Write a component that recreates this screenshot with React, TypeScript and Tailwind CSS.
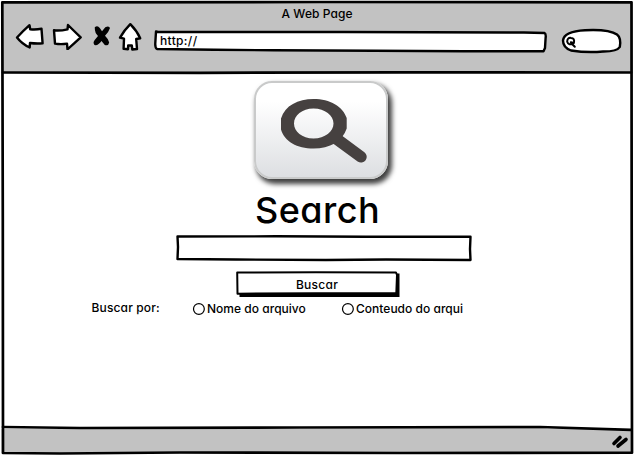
import type { ReactNode } from "react";

const ink = {
  fill: "none",
  stroke: "#000",
  strokeWidth: 2.4,
  strokeLinejoin: "round" as const,
  strokeLinecap: "round" as const,
};

/** Hand-drawn outline laid behind a control's content. */
function Sketch({ w, h, children }: { w: number; h: number; children: ReactNode }) {
  return (
    <svg className="pointer-events-none absolute left-0 top-0 overflow-visible" width={w} height={h} viewBox={`0 0 ${w} ${h}`}>
      {children}
    </svg>
  );
}

function NavIcons() {
  return (
    <div className="flex pl-[15px] pt-[22px]">
      <svg width="29" height="28" viewBox="15 22 29 28">
        <path {...ink} fill="#fff" d="M17 37.5Q23 31 29.5 25.2L30.2 29.3Q36 29.8 41.5 28.8L42.6 43.3Q36 43.8 30 43L29.7 47.5Q22 44 17 37.5Z" />
      </svg>
      <svg className="ml-[8px]" width="31" height="28" viewBox="52 22 31 28">
        <path {...ink} fill="#fff" d="M54 30.3Q60 31 67.5 29.3L68 25Q74 31 80.7 37.3Q74 43.5 67.5 49.3L67 43.6Q61 44.6 55 43.6Z" />
      </svg>
      <svg className="ml-[10px]" width="18" height="28" viewBox="93 22 18 28">
        <path d="M94.8 27.2Q97.500 24.800 99.800 28L102 31.200L105.300 27.3Q109 25.300 110 28Q108.300 33 105 35.700Q108.500 39 109.200 42.5Q108.500 46.200 104.800 44.900L101.500 41Q98 46 94.500 45Q92.500 43 94.700 40L98 36Q94.500 33 94.800 27.2Z" />
      </svg>
      <svg className="ml-[7px]" width="25" height="30" viewBox="118 22 25 30">
        <path {...ink} fill="#fff" d="M120 37.7Q124 30.5 130.3 24.2Q137 31 140.2 38.3L136.2 39L137 49L132.3 49.5L131.8 45.5L128.2 45.4L128 49.2L123.6 48.8L124 38.7Z" />
      </svg>
    </div>
  );
}

function BrowserBar() {
  return (
    <header className="relative h-[73px] shrink-0 bg-[#c2c2c2]">
      <div className="flex h-full">
        <NavIcons />
        <div className="relative ml-[11px] mt-[30px] h-[23px] w-[393px] pl-[6px] text-[12px] leading-[21px] tracking-[0.35px]">
          <Sketch w={393} h={23}>
            <path {...ink} fill="#fff" d="M2 1.5L4 2L190 2L370 2.5L390.5 3Q392.2 4 391.6 8L391 18L389.5 21.3L310 21.2L220 20.8L120 20.3L60 19.8L3 19Q1 18 1.3 13Z" />
          </Sketch>
          <span className="relative">http://</span>
        </div>
        <div className="relative ml-[14px] mt-[29px] h-[25px] w-[60px]">
          <Sketch w={60} h={25}>
            <path {...ink} fill="#fff" d="M2 11.5Q3 2.3 24 1.2Q48 0 56 5.5Q60.4 9 58.8 18Q56 22.6 42 22.5Q26 24 10 21.5Q2 18.5 2 11.5Z" />
            <path {...ink} strokeWidth={2} d="M12.5 14.2Q7.500 17 6.200 12.7Q6.200 8.400 10 8.900Q14 9.200 12.900 14L9.800 13.2M10.800 14.8L13.800 17.8" />
          </Sketch>
        </div>
      </div>
      <h1 className="absolute left-[281.500px] top-[5px] whitespace-nowrap text-[12px] leading-[17px] tracking-[0.08px]">A Web Page</h1>
    </header>
  );
}

function SearchBadge() {
  return (
    <div className="ml-[254px] flex h-[98px] w-[134px] rounded-[18px] border-[2.5px] border-[#c9caca] bg-linear-to-b from-white from-20% to-[#dddfe2] shadow-[3px_4px_5px_1px_rgba(0,0,0,0.75)]">
      <svg width="129" height="94" viewBox="256 82.500 129 94">
        <path d="M334 136.500L361 156.300" stroke="#464140" strokeWidth="11.500" strokeLinecap="round" />
        <path fillRule="evenodd" fill="#464140" d="M281 118C285 105 298 98.5 313.500 98.5C330 98.5 343 106 346.700 117.500V128C342.500 141 330 148 313.500 148C297 148 284.500 141 281 129ZM313.500 108C302 108 294 115 294 123C294 131 302 138 313.500 138C325 138 333.500 131 333.500 123C333.500 115 325 108 313.500 108Z" />
      </svg>
    </div>
  );
}

function Radio({ label, className }: { label: string; className: string }) {
  return (
    <label className={`flex items-center overflow-hidden whitespace-nowrap ${className}`}>
      <svg className="shrink-0" width="14" height="14" viewBox="0 0 14 14">
        <circle cx="6.900" cy="7" r="5.400" fill="#fff" stroke="#000" strokeWidth="1.200" />
      </svg>
      <span className="ml-px">{label}</span>
    </label>
  );
}

function SearchForm() {
  return (
    <form className="flex flex-col text-[12px]">
      <div className="relative ml-[176px] mt-[4px] h-[26px] w-[296px]">
        <Sketch w={296} h={26}>
          <path {...ink} fill="#fff" d="M1.500 1.500L100 1.300L190 1.800L294.500 1.700L294 14L294.500 25L210 24.500L150 25L60 24.500L1.500 24L2 12Z" />
        </Sketch>
      </div>
      <button type="button" className="relative ml-[236px] mt-[10px] h-[26px] w-[164px] pr-[2px] leading-[23px]">
        <Sketch w={164} h={26}>
          <path d="M3.500 22L160 21V2.500H163.500V26H3.500Z" />
          <path {...ink} strokeWidth={2} fill="#fff" d="M1.200 1.500L80 1.300L160 1.500L161 4L160.300 22.300L80 22.200L1.500 22.700Z" />
        </Sketch>
        <span className="relative tracking-[0.25px]">Buscar</span>
      </button>
      <fieldset className="mt-[2px] flex h-[24px] items-center">
        <span className="ml-[91.500px] w-[100.500px] pb-[1px] tracking-[0.15px]">Buscar por:</span>
        <Radio label="Nome do arquivo" className="w-[149px] tracking-[0.02px]" />
        <Radio label="Conteudo do arqui" className="w-[124px] tracking-[0.02px]" />
      </fieldset>
    </form>
  );
}

export default function App() {
  return (
    <div className="relative flex h-[455px] w-[634px] flex-col overflow-hidden bg-white font-['Inter','Noto_Sans',sans-serif] font-[450] text-black [font-feature-settings:'cv11']">
      <BrowserBar />
      <main className="flex grow flex-col pt-[8px]">
        <SearchBadge />
        <h2 className="ml-[255px] mt-[10px] h-[42px] whitespace-nowrap text-[36px] leading-[42px] tracking-[0.45px]">Search</h2>
        <SearchForm />
      </main>
      <footer className="flex h-[26px] shrink-0 items-center justify-end bg-[#c2c2c2] pr-[5px]">
        <svg width="18" height="16" viewBox="611 434 18 16">
          <path d="M614 443.500L620 437.500M618 446L626 439.500" stroke="#000" strokeWidth="3.600" strokeLinecap="round" />
        </svg>
      </footer>
      <Sketch w={634} h={455}>
        <path d="M500 426H631V429.500L500 427Z" fill="#fff" />
        <path d="M0 0H634V455H0Z" fill="none" stroke="#fff" strokeWidth="3" />
        <g {...ink} strokeWidth={2.700}>
          <path d="M2.300 2.300L320 2L631.500 2.300L631.700 230L632 452.700L400 453L180 452.500L60 453.500L3 453L2.800 220Z" />
          <path d="M3 72.500L200 72.800L400 72.400L631 72.500" />
          <path d="M3 427L80 428L300 427.500L540 427L631 429.800" />
        </g>
      </Sketch>
    </div>
  );
}
